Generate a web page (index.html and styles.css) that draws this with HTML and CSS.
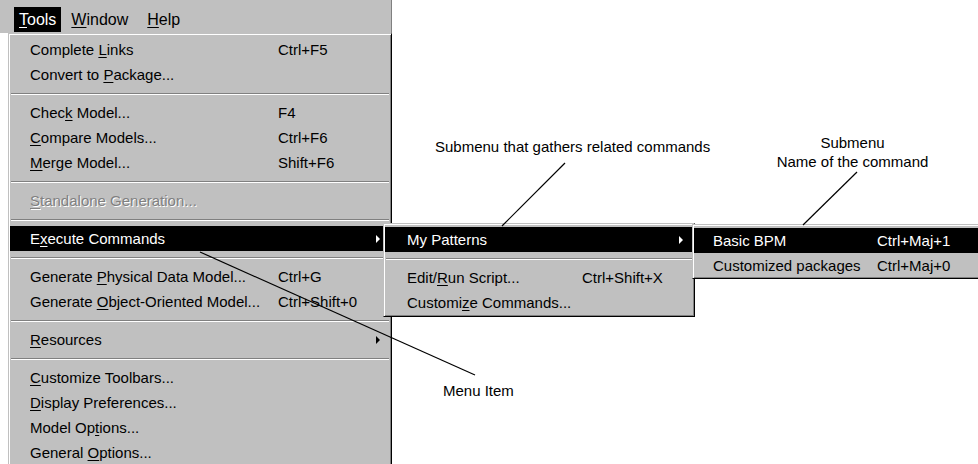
FILE: index.html
```html
<!DOCTYPE html>
<html lang="en">
<head>
    <meta charset="UTF-8">
    <meta name="viewport" content="width=device-width, initial-scale=1.0">
    <title>Tools menu</title>
    <link rel="stylesheet" href="styles.css">
</head>
<body>
<div class="screen">
    <!-- Menu bar -->
    <div class="menubar">
        <span class="menubar-title active"><u>T</u>ools</span>
        <span class="menubar-title"><u>W</u>indow</span>
        <span class="menubar-title"><u>H</u>elp</span>
    </div>

    <!-- Tools drop-down -->
    <div class="menu menu-tools">
        <div class="item"><span class="label">Complete <u>L</u>inks</span><span class="shortcut">Ctrl+F5</span></div>
        <div class="item"><span class="label">Convert to <u>P</u>ackage...</span></div>
        <div class="sep"></div>
        <div class="item"><span class="label">Chec<u>k</u> Model...</span><span class="shortcut">F4</span></div>
        <div class="item"><span class="label"><u>C</u>ompare Models...</span><span class="shortcut">Ctrl+F6</span></div>
        <div class="item"><span class="label"><u>M</u>erge Model...</span><span class="shortcut">Shift+F6</span></div>
        <div class="sep"></div>
        <div class="item disabled"><span class="label"><u>S</u>tandalone Generation...</span></div>
        <div class="sep"></div>
        <div class="item selected has-sub">
            <span class="label">E<u>x</u>ecute Commands</span><span class="arrow"></span>

            <!-- Execute Commands submenu -->
            <div class="menu submenu menu-exec">
                <div class="item selected has-sub">
                    <span class="label">My Patterns</span><span class="arrow"></span>

                    <!-- My Patterns submenu -->
                    <div class="menu submenu menu-patterns">
                        <div class="item selected"><span class="label">Basic BPM</span><span class="shortcut">Ctrl+Maj+1</span></div>
                        <div class="item"><span class="label">Customized packages</span><span class="shortcut">Ctrl+Maj+0</span></div>
                    </div>
                </div>
                <div class="sep"></div>
                <div class="item"><span class="label">Edit/<u>R</u>un Script...</span><span class="shortcut">Ctrl+Shift+X</span></div>
                <div class="item"><span class="label">Customi<u>z</u>e Commands...</span></div>
            </div>
        </div>
        <div class="sep"></div>
        <div class="item"><span class="label">Generate <u>P</u>hysical Data Model...</span><span class="shortcut">Ctrl+G</span></div>
        <div class="item"><span class="label">Generate <u>O</u>bject-Oriented Model...</span><span class="shortcut">Ctrl+Shift+0</span></div>
        <div class="sep"></div>
        <div class="item has-sub"><span class="label"><u>R</u>esources</span><span class="arrow"></span></div>
        <div class="sep"></div>
        <div class="item"><span class="label"><u>C</u>ustomize Toolbars...</span></div>
        <div class="item"><span class="label"><u>D</u>isplay Preferences...</span></div>
        <div class="item"><span class="label">Model Op<u>t</u>ions...</span></div>
        <div class="item"><span class="label">General <u>O</u>ptions...</span></div>
    </div>

    <!-- Callouts -->
    <div class="note note-group">Submenu that gathers related commands</div>
    <div class="note note-command">Submenu<br>Name of the command</div>
    <div class="note note-item">Menu Item</div>

    <svg class="leaders" width="978" height="464" viewBox="0 0 978 464">
        <line x1="565" y1="163" x2="502" y2="226"/>
        <line x1="857" y1="172" x2="803" y2="225"/>
        <line x1="200" y1="252" x2="475" y2="375"/>
    </svg>
</div>
</body>
</html>
```

FILE: styles.css
```css
/* Page */
body {
    margin: 0;
    background: #fff;
    font-family: "Liberation Sans", Arial, sans-serif;
    font-size: 15px;
    color: #000;
    overflow: hidden;
}

.screen {
    position: relative; /* canvas for the callouts */
    width: 978px;
    height: 464px;
    overflow: hidden;
}

u {
    text-decoration-thickness: 1px;
    text-underline-offset: 2px;
}

/* Menu bar */
.menubar {
    display: flex;
    gap: 5px;
    box-sizing: border-box;
    width: 392px;
    height: 33px;
    padding: 7px 0 0 14px;
    background: #c0c0c0;
    border-right: 1px solid #808080;
    font-size: 16px;
}

.menubar-title {
    height: 25px;
    line-height: 25px;
    padding: 0 5px;
}

.menubar-title:last-child {
    margin-left: 4px;
}

.menubar-title.active {
    background: #000;
    color: #fff;
}

/* Drop-down menus */
.menu {
    box-sizing: border-box;
    background: #c0c0c0;
    color: #000;
    border: 1px solid;
    border-color: #c0c0c0 #000 #000 #c0c0c0;
    box-shadow: inset 1px 1px #fff, inset -1px -1px #808080;
    padding: 3px 1px 1px 1px;
}

.menu-tools {
    margin-left: 8px;
    width: 384px;
}

.item {
    display: flex;
    align-items: center;
    height: 25px;
    line-height: 25px;
    padding-left: 20px;
    white-space: nowrap;
}

.item.selected {
    background: #000;
    color: #fff;
}

.item.disabled {
    color: #808080;
    text-shadow: 1px 1px #fff;
}

.has-sub {
    position: relative;
}

.menu-tools .label { width: 248px; }

.arrow {
    width: 0;
    height: 0;
    margin-left: auto;
    margin-right: 10px;
    border-left: 4px solid currentColor;
    border-top: 4px solid transparent;
    border-bottom: 4px solid transparent;
}

/* Separator */
.sep {
    height: 13px;
    display: flex;
    align-items: center;
}

.sep::before {
    content: "";
    flex: 1;
    margin: 0 1px;
    border-top: 1px solid #808080;
    border-bottom: 1px solid #fff;
}

/* Submenus */
.submenu {
    position: absolute;
    top: -3px;
    z-index: 2;
    text-shadow: none;
}

.menu-exec {
    left: 373px;
    width: 312px;
}

.menu-exec .item { padding-left: 22px; }
.menu-exec .label { width: 175px; }

.menu-patterns {
    left: 307px;
    width: 300px;
    padding-bottom: 0;
}

.menu-patterns .item { padding-left: 19px; }
.menu-patterns .label { width: 164px; }

/* Callouts */
.note {
    position: absolute;
    white-space: nowrap;
    line-height: 19px;
}

.note-group {
    left: 435px;
    top: 137px;
}

.note-command {
    left: 775px;
    top: 133px;
    width: 155px;
    text-align: center;
}

.note-item {
    left: 443px;
    top: 381px;
}

.leaders {
    position: absolute;
    left: 0;
    top: 0;
    z-index: 5;
    pointer-events: none;
}

.leaders line {
    stroke: #000;
    stroke-width: 1.2;
}
```
